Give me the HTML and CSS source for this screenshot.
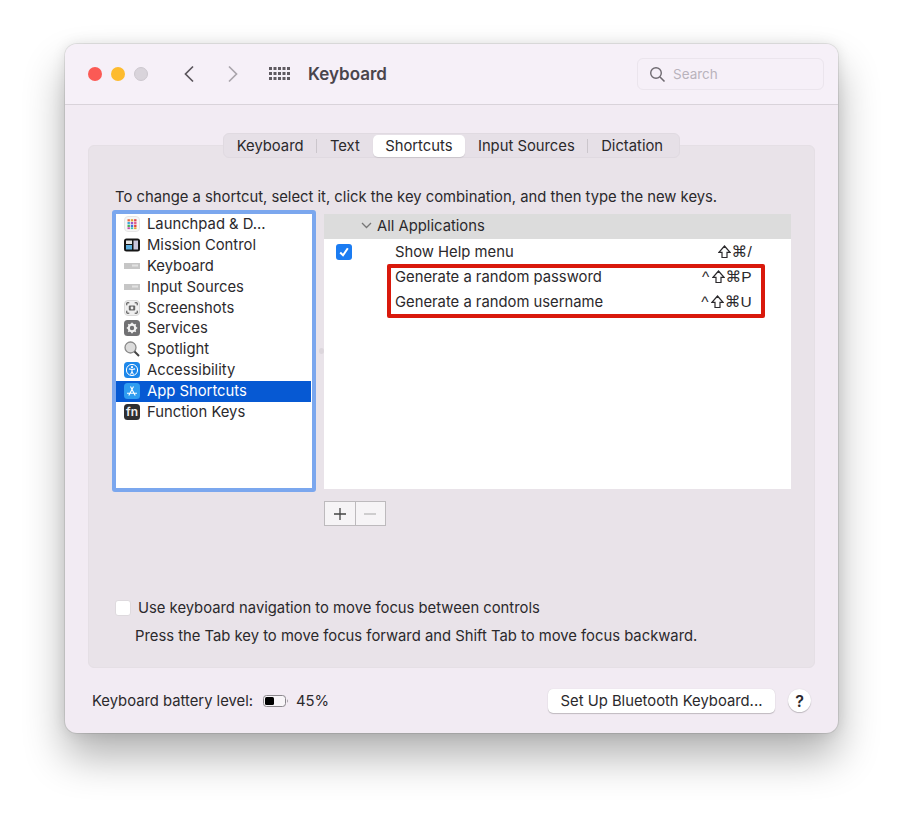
FILE: index.html
```html
<!DOCTYPE html>
<html lang="en">
<head>
<meta charset="utf-8">
<title>Keyboard</title>
<link rel="stylesheet" href="styles.css">
</head>
<body>
<div class="window">
  <header class="titlebar">
    <div class="lights"><span class="light red"></span><span class="light yellow"></span><span class="light gray"></span></div>
    <svg class="chev back" width="12" height="18" viewBox="0 0 12 18"><path d="M10 1.500 2.500 9l7.500 7.500" fill="none" stroke="#5a555c" stroke-width="1.700"/></svg>
    <svg class="chev fwd" width="12" height="18" viewBox="0 0 12 18"><path d="M2 1.500 9.500 9 2 16.500" fill="none" stroke="#aaa5ac" stroke-width="1.700"/></svg>
    <svg class="grid" width="21" height="14" viewBox="0 0 21 14" fill="#5f5a61"><rect x="0" y="0" width="3" height="3"/><rect x="4.500" y="0" width="3" height="3"/><rect x="9" y="0" width="3" height="3"/><rect x="13.500" y="0" width="3" height="3"/><rect x="18" y="0" width="3" height="3"/><rect x="0" y="5" width="3" height="3"/><rect x="4.500" y="5" width="3" height="3"/><rect x="9" y="5" width="3" height="3"/><rect x="13.500" y="5" width="3" height="3"/><rect x="18" y="5" width="3" height="3"/><rect x="0" y="10" width="3" height="3"/><rect x="4.500" y="10" width="3" height="3"/><rect x="9" y="10" width="3" height="3"/><rect x="13.500" y="10" width="3" height="3"/><rect x="18" y="10" width="3" height="3"/></svg>
    <h1 class="title">Keyboard</h1>
    <div class="search">
      <svg width="17" height="17" viewBox="0 0 17 17"><circle cx="7" cy="7" r="5.300" fill="none" stroke="#6f6a71" stroke-width="1.400"/><path d="m11 11 4.500 4.500" stroke="#6f6a71" stroke-width="1.600"/></svg>
      <span>Search</span>
    </div>
  </header>
  <main class="main">
    <nav class="tabs">
      <span class="tab">Keyboard</span><i class="sep"></i><span class="tab">Text</span><span class="tab active">Shortcuts</span><span class="tab">Input Sources</span><i class="sep"></i><span class="tab">Dictation</span>
    </nav>
    <section class="panel">
      <p class="hint">To change a shortcut, select it, click the key combination, and then type the new keys.</p>
      <div class="columns">
        <ul class="sidebar">
          <li class="item"><svg class="ico" width="16" height="16" viewBox="0 0 16 16"><rect x=".5" y=".5" width="15" height="15" rx="3.500" fill="#f7f7f7" stroke="#e6e6e6"/><rect x="3.500" y="3.200" width="2.400" height="2.200" fill="#e8663d"/><rect x="6.800" y="3.200" width="2.400" height="2.200" fill="#e0a12f"/><rect x="10.100" y="3.200" width="2.400" height="2.200" fill="#d8434a"/><rect x="3.500" y="6" width="2.400" height="2.200" fill="#3fa5d8"/><rect x="6.800" y="6" width="2.400" height="2.200" fill="#9a55c8"/><rect x="10.100" y="6" width="2.400" height="2.200" fill="#e25a90"/><rect x="3.500" y="8.800" width="2.400" height="2.200" fill="#46b058"/><rect x="6.800" y="8.800" width="2.400" height="2.200" fill="#3e70d8"/><rect x="10.100" y="8.800" width="2.400" height="2.200" fill="#e0453f"/><rect x="3.500" y="11.300" width="2.400" height="1.800" fill="#c548a8"/><rect x="6.800" y="11.300" width="2.400" height="1.800" fill="#3ac0b0"/><rect x="10.100" y="11.300" width="2.400" height="1.800" fill="#e0a12f"/></svg>Launchpad &amp; D...</li>
          <li class="item"><svg class="ico" width="16" height="16" viewBox="0 0 16 16"><rect y="1.500" width="16" height="13" rx="2.500" fill="#151515"/><rect x="2" y="3.500" width="6" height="3.500" fill="#e8e8e8"/><rect x="2" y="8" width="6" height="4.500" fill="#5fb0e0"/><rect x="9.500" y="3.500" width="4.500" height="9" fill="#c9c6dc"/></svg>Mission Control</li>
          <li class="item"><svg class="ico" width="16" height="16" viewBox="0 0 16 16"><rect x="-1.500" y="5" width="19" height="6" rx="1" fill="#c6c6c6"/><rect x="8" y="6.500" width="6" height="2" fill="#e2e2e2"/></svg>Keyboard</li>
          <li class="item"><svg class="ico" width="16" height="16" viewBox="0 0 16 16"><rect x="-1.500" y="5" width="19" height="6" rx="1" fill="#c6c6c6"/><rect x="8" y="6.500" width="6" height="2" fill="#e2e2e2"/></svg>Input Sources</li>
          <li class="item"><svg class="ico" width="16" height="16" viewBox="0 0 16 16"><rect x=".5" y=".5" width="15" height="15" rx="3.500" fill="#efefef" stroke="#d8d8d8"/><path d="M2.800 5.300V2.800h2.500M10.700 2.800h2.500v2.500M13.200 10.700v2.500h-2.500M5.300 13.200H2.800v-2.500" fill="none" stroke="#444" stroke-width="1"/><rect x="4.800" y="5.500" width="6.400" height="5" rx="1" fill="#666"/><circle cx="8" cy="8" r="1.400" fill="#eee"/></svg>Screenshots</li>
          <li class="item"><svg class="ico" width="16" height="16" viewBox="0 0 16 16"><rect width="16" height="16" rx="3.500" fill="#717173"/><circle cx="8" cy="8" r="3.300" fill="none" stroke="#f2f2f2" stroke-width="2.200"/><path d="M8 2.800v2M8 11.200v2M2.800 8h2M11.200 8h2M4.300 4.300l1.400 1.400M10.300 10.300l1.400 1.400M11.700 4.300l-1.400 1.400M5.700 10.300l-1.400 1.400" stroke="#f2f2f2" stroke-width="1.600"/></svg>Services</li>
          <li class="item"><svg class="ico" width="16" height="16" viewBox="0 0 16 16"><circle cx="6.500" cy="6.500" r="5.500" fill="#dcdcdc" stroke="#8a8a8a" stroke-width="1.300"/><path d="m10.500 10.500 4.500 4.500" stroke="#444" stroke-width="2"/></svg>Spotlight</li>
          <li class="item"><svg class="ico" width="16" height="16" viewBox="0 0 16 16"><rect width="16" height="16" rx="3.500" fill="#1e88ea"/><circle cx="8" cy="8" r="5.600" fill="none" stroke="#fff" stroke-width="1"/><circle cx="8" cy="5.200" r="1.100" fill="#fff"/><path d="M4.900 6.900 8 7.500l3.100-.6M8 7.500v2.300M8 9.800l-1.500 2.700M8 9.800l1.500 2.700" fill="none" stroke="#fff" stroke-width="1.100"/></svg>Accessibility</li>
          <li class="item selected"><svg class="ico" width="16" height="16" viewBox="0 0 16 16"><rect width="16" height="16" rx="3.500" fill="#2f9cf0"/><path d="M4.800 12.500 9.500 3.500M11.200 12.500 6.500 3.500M3 10.300h10" fill="none" stroke="#fff" stroke-width="1.100"/></svg>App Shortcuts</li>
          <li class="item"><span class="fn">fn</span>Function Keys</li>
        </ul>
        <div class="splitter"><i class="handle"></i></div>
        <div class="right">
          <div class="table">
            <div class="group"><svg width="11" height="7" viewBox="0 0 11 7"><path d="m1 1 4.500 4.500L10 1" fill="none" stroke="#777" stroke-width="1.300"/></svg><span>All Applications</span></div>
            <div class="row"><span class="check"><svg width="12" height="12" viewBox="0 0 12 12"><path d="M2.200 6.500 5 9.300l4.800-7" fill="none" stroke="#fff" stroke-width="2"/></svg></span><span class="name">Show Help menu</span><span class="keys"><svg class="shift" width="13" height="14" viewBox="0 0 13 14"><path d="M6.500 1 12 7.300H9v5.200H4V7.300H1z" fill="none" stroke="#2b292c" stroke-width="1.200"/></svg>⌘/</span></div>
            <div class="row"><span class="name">Generate a random password</span><span class="keys">^<svg class="shift" width="13" height="14" viewBox="0 0 13 14"><path d="M6.500 1 12 7.300H9v5.200H4V7.300H1z" fill="none" stroke="#2b292c" stroke-width="1.200"/></svg>⌘P</span></div>
            <div class="row"><span class="name">Generate a random username</span><span class="keys">^<svg class="shift" width="13" height="14" viewBox="0 0 13 14"><path d="M6.500 1 12 7.300H9v5.200H4V7.300H1z" fill="none" stroke="#2b292c" stroke-width="1.200"/></svg>⌘U</span></div>
            <div class="highlight"></div>
          </div>
          <div class="addremove"><span class="ab add"><svg width="14" height="14" viewBox="0 0 14 14"><path d="M7 1v12M1 7h12" stroke="#444" stroke-width="1.300"/></svg></span><span class="ab"><svg width="14" height="14" viewBox="0 0 14 14"><path d="M1 7h12" stroke="#b8b8b8" stroke-width="1.300"/></svg></span></div>
        </div>
      </div>
      <div class="navrow"><span class="box"></span><span>Use keyboard navigation to move focus between controls</span></div>
      <p class="navnote">Press the Tab key to move focus forward and Shift Tab to move focus backward.</p>
    </section>
    <footer class="footer">
      <span>Keyboard battery level:</span>
      <svg class="battery" width="26" height="12" viewBox="0 0 26 12"><rect x=".5" y=".5" width="22" height="11" rx="3" fill="#f8f5f8" stroke="#8b878c"/><rect x="2" y="2" width="9" height="8" rx="1.500" fill="#000"/><path d="M24.300 4.300c1 .6 1 2.800 0 3.400z" fill="#8b878c"/></svg>
      <span class="pct">45%</span>
      <button class="btn" type="button">Set Up Bluetooth Keyboard...</button>
      <button class="help" type="button">?</button>
    </footer>
  </main>
</div>
</body>
</html>
```
FILE: styles.css
```css
* { box-sizing: border-box; }
html, body { margin: 0; padding: 0; }
body {
  background: #fff;
  height: 819px;
  overflow: hidden;
  padding: 44px 65px 0;
  font-family: Inter, "Liberation Sans", "DejaVu Sans", sans-serif;
  font-size: 14.8px;
  color: #2b292c;
}
.window {
  width: 773px;
  height: 689px;
  border-radius: 12px;
  background: #f2ebf3;
  box-shadow: 0 24px 42px rgba(0,0,0,.3), 0 0 14px rgba(0,0,0,.1), 0 0 0 1px rgba(0,0,0,.08);
}
.titlebar {
  height: 61px;
  display: flex;
  align-items: center;
  background: #f6f0f8;
  border-bottom: 1px solid #d9d3da;
  border-radius: 12px 12px 0 0;
  padding: 0 14px 0 23px;
}
.lights { display: flex; gap: 9px; }
.light { width: 14px; height: 14px; border-radius: 50%; }
.red { background: #fb5a55; }
.yellow { background: #fdbb2e; }
.gray { background: #d9d4db; border: 1px solid #cdc8cf; }
.back { margin-left: 35px; }
.fwd { margin-left: 32px; }
.grid { margin-left: 30px; }
.title { margin: 0 0 0 18px; font-size: 17px; font-weight: 600; color: #4a454c; }
.search {
  margin-left: auto;
  width: 187px;
  height: 32px;
  border: 1px solid #ebe5ed;
  border-radius: 6px;
  display: flex;
  align-items: center;
  gap: 7px;
  padding-left: 11px;
  color: #b9b3bc;
  font-size: 13.5px;
}
.main { padding: 28px 23px 0; }
.tabs {
  position: relative;
  z-index: 1;
  width: 457px;
  height: 25px;
  margin: 0 0 -13px 135px;
  display: flex;
  align-items: center;
  background: #e6e0e7;
  border: 1px solid #e0dae1;
  border-radius: 6px;
}
.tab { padding: 0 12.7px; line-height: 22px; height: 22px; white-space: nowrap; }
.tab.active { background: #fff; border-radius: 5px; box-shadow: 0 1px 1px rgba(0,0,0,.1); }
.sep { width: 1px; height: 14px; background: #cbc6cc; }
.panel {
  height: 523px;
  background: #e9e3e9;
  border: 1px solid #e5dfe5;
  border-radius: 6px;
  padding: 41px 23px 0;
}
.hint { margin: 0 0 3px 3px; line-height: 20px; }
.columns { display: flex; height: 316px; }
.sidebar {
  list-style: none;
  margin: 0;
  padding: 0;
  width: 204px;
  height: 282px;
  background: #fff;
  border: 4px solid #7ba7ee;
  border-radius: 3px;
}
.item {
  height: 20.9px;
  display: flex;
  align-items: center;
  gap: 7px;
  padding: 0 0 1px 8px;
  white-space: nowrap;
}
.ico, .fn { flex: none; width: 16px; height: 16px; }
.item.selected { background: #0659d3; color: #fff; margin-right: 1px; }
.fn {
  background: #2f2f31;
  color: #eee;
  border-radius: 3.5px;
  font-size: 12px;
  font-weight: 600;
  line-height: 15px;
  text-align: center;
}
.splitter { width: 8px; height: 282px; display: flex; align-items: center; justify-content: center; }
.handle { width: 6px; height: 6px; border-radius: 50%; background: #dcd6dc; margin-left: 3px; }
.right { width: 467px; padding-top: 4px; }
.table { position: relative; height: 275px; background: #fff; }
.group {
  height: 25px;
  background: #dcdcdc;
  display: flex;
  align-items: center;
  padding: 0 0 2px 37px;
  gap: 5px;
}
.row { position: relative; height: 25.3px; display: flex; align-items: center; padding: 0 39px 0 71px; }
.keys { margin-left: auto; display: flex; align-items: center; font-family: "Liberation Sans", "DejaVu Sans", sans-serif; font-size: 15.5px; letter-spacing: .3px; }
.shift { margin: 0 1px 0 2px; }
.check {
  position: absolute;
  left: 12px;
  top: 5px;
  width: 16px;
  height: 16px;
  border-radius: 3px;
  background: #1b7cf2;
  display: flex;
  align-items: center;
  justify-content: center;
}
.highlight {
  position: absolute;
  left: 63px;
  top: 50px;
  width: 378px;
  height: 54px;
  border: 4px solid #d9190c;
  border-radius: 2px;
}
.addremove { display: flex; width: 62px; height: 25px; margin-top: 12px; border: 1px solid #bdbabd; background: #f6f4f6; }
.ab { flex: 1; display: flex; align-items: center; justify-content: center; }
.add { border-right: 1px solid #bdbabd; }
.navrow { display: flex; align-items: center; gap: 7px; height: 20px; margin-left: 3px; margin-top: 72px; }
.box { width: 16px; height: 16px; background: #fff; border-radius: 3px; border: 1px solid #dedade; }
.navnote { margin: 8px 0 0 23px; line-height: 20px; }
.footer { display: flex; align-items: center; height: 65px; padding: 0 4px; }
.battery { margin-left: 10px; }
.pct { margin-left: 7px; }
.btn {
  margin-left: auto;
  width: 227px;
  height: 24px;
  padding: 0;
  border: none;
  border-radius: 5px;
  background: #fff;
  box-shadow: 0 1px 1px rgba(0,0,0,.2), 0 0 1px rgba(0,0,0,.15);
  font: inherit;
  color: inherit;
}
.help {
  margin-left: 13px;
  width: 23px;
  height: 23px;
  padding: 0;
  border: none;
  border-radius: 50%;
  background: #fff;
  box-shadow: 0 1px 1px rgba(0,0,0,.2), 0 0 1px rgba(0,0,0,.15);
  font: inherit;
  font-size: 16px;
  font-weight: 600;
  color: inherit;
}
```
